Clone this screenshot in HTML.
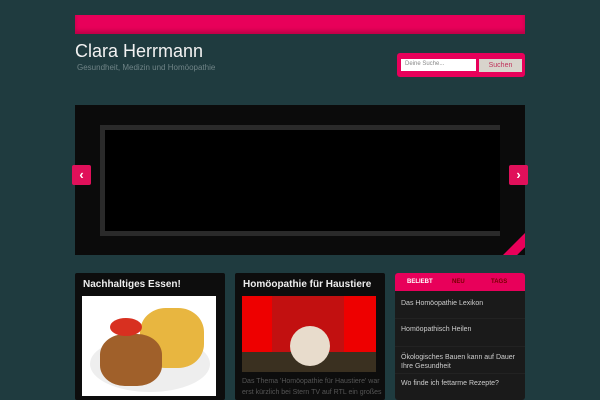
<!DOCTYPE html><html><head><style>
*{margin:0;padding:0;box-sizing:border-box}
body{width:600px;height:400px;overflow:hidden;background:#1f3b3f;font-family:"Liberation Sans",sans-serif;position:relative}
.a{position:absolute}
</style></head><body>
<div class="a" style="left:75px;top:15px;width:450px;height:19px;background:#e8005a;box-shadow:inset 0 -3px 4px rgba(120,0,40,.4)"></div>
<div class="a" style="left:75px;top:41px;font-size:18px;color:#f2f2f2">Clara Herrmann</div>
<div class="a" style="left:77px;top:63px;font-size:8px;color:#6f8386">Gesundheit, Medizin und Homöopathie</div>
<div class="a" style="left:397px;top:53px;width:128px;height:24px;background:#e8005a;border-radius:3px"></div>
<div class="a" style="left:401px;top:59px;width:75px;height:12px;background:#fff;font-size:6px;color:#888;padding:2px 4px">Deine Suche...</div>
<div class="a" style="left:479px;top:59px;width:43px;height:13px;background:#d8d4cc;font-size:7px;color:#c0305a;text-align:center;line-height:13px">Suchen</div>
<div class="a" style="left:75px;top:105px;width:450px;height:150px;background:#0b0b0b;overflow:hidden">
<div class="a" style="left:25px;top:20px;width:400px;height:111px;border:5px solid #2a2a2a;border-right:none;background:#000"></div>
<div class="a" style="left:418px;top:160px;width:60px;height:10px;background:#e8005a;transform:rotate(-45deg);transform-origin:0 0"></div>
</div>
<div class="a" style="left:72px;top:165px;width:19px;height:20px;background:#e0105a;border-radius:2px;color:#fff;font-size:13px;font-weight:bold;text-align:center;line-height:20px">‹</div>
<div class="a" style="left:509px;top:165px;width:19px;height:20px;background:#e0105a;border-radius:2px;color:#fff;font-size:13px;font-weight:bold;text-align:center;line-height:20px">›</div>
<div class="a" style="left:75px;top:273px;width:150px;height:127px;background:#0d0d0d;border-radius:2px">
<div class="a" style="left:8px;top:6px;font-size:10px;font-weight:bold;color:#eee">Nachhaltiges Essen!</div>
<div class="a" style="left:7px;top:23px;width:134px;height:100px;background:#fff;overflow:hidden">
<div class="a" style="left:8px;top:40px;width:120px;height:56px;border-radius:50%;background:#eee"></div>
<div class="a" style="left:58px;top:12px;width:64px;height:60px;border-radius:40%;background:#e8b640"></div>
<div class="a" style="left:18px;top:38px;width:62px;height:52px;border-radius:40%;background:#a0602a"></div>
<div class="a" style="left:28px;top:22px;width:32px;height:18px;border-radius:50%;background:#d83020"></div>
</div></div>
<div class="a" style="left:235px;top:273px;width:150px;height:127px;background:#0d0d0d;border-radius:2px">
<div class="a" style="left:8px;top:6px;font-size:10px;font-weight:bold;color:#eee">Homöopathie für Haustiere</div>
<div class="a" style="left:7px;top:23px;width:134px;height:76px;background:#e00;overflow:hidden">
<div class="a" style="left:30px;top:0;width:72px;height:60px;background:#c21010"></div>
<div class="a" style="left:0;top:56px;width:134px;height:20px;background:#3a3020"></div>
<div class="a" style="left:48px;top:30px;width:40px;height:40px;border-radius:50%;background:#e8dccc"></div>
</div>
<div class="a" style="left:7px;top:103px;width:140px;font-size:7px;line-height:11px;color:#555">Das Thema 'Homöopathie für Haustiere' war erst kürzlich bei Stern TV auf RTL ein großes</div>
</div>
<div class="a" style="left:395px;top:273px;width:130px;height:127px;background:#1a1a1a;border-radius:3px">
<div class="a" style="left:0;top:0;width:130px;height:18px;background:#e8005a;border-radius:3px 3px 0 0;font-size:6px;font-weight:bold;line-height:18px">
<span class="a" style="left:12px;color:#fff">BELIEBT</span><span class="a" style="left:57px;color:#700">NEU</span><span class="a" style="left:96px;color:#700">TAGS</span></div>
<div class="a" style="left:6px;top:26px;width:122px;font-size:7px;line-height:10px;color:#ccc">Das Homöopathie Lexikon</div>
<div class="a" style="left:0;top:45px;width:130px;height:1px;background:#222"></div>
<div class="a" style="left:6px;top:53px;font-size:7px;color:#ccc">Homöopathisch Heilen</div>
<div class="a" style="left:0;top:73px;width:130px;height:1px;background:#222"></div>
<div class="a" style="left:6px;top:80px;width:124px;font-size:7px;line-height:9px;color:#ccc">Ökologisches Bauen kann auf Dauer Ihre Gesundheit</div>
<div class="a" style="left:0;top:100px;width:130px;height:1px;background:#222"></div>
<div class="a" style="left:6px;top:107px;font-size:7px;color:#ccc">Wo finde ich fettarme Rezepte?</div>
</div>
</body></html>
